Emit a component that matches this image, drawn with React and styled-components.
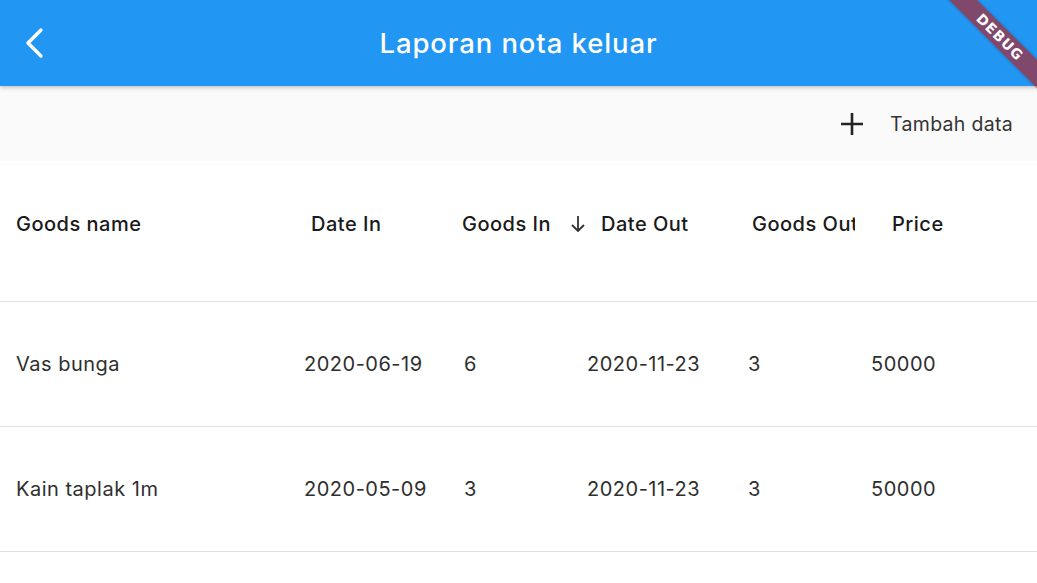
import React from 'react';
import styled, { createGlobalStyle } from 'styled-components';

const GlobalStyle = createGlobalStyle`
  html, body {
    margin: 0;
    padding: 0;
    background: #fafafa;
    font-family: Inter, Roboto, "Noto Sans", sans-serif;
  }
`;

const Screen = styled.div`
  position: relative;
  width: 1037px;
  height: 583px;
  overflow: hidden;
  background: #ffffff;
  display: flex;
  flex-direction: column;
`;

const AppBar = styled.header`
  height: 86px;
  flex-shrink: 0;
  background: #2196f3;
  display: flex;
  align-items: center;
  position: relative;
  z-index: 2;
  box-shadow: 0 2px 4px rgba(0, 0, 0, 0.2);
`;

const BackButton = styled.button`
  width: 70px;
  height: 86px;
  border: 0;
  background: transparent;
  padding: 0 0 0 22px;
  display: flex;
  align-items: center;
  color: #ffffff;
  cursor: pointer;
`;

const Title = styled.h1`
  flex: 1;
  margin: 0 70px 0 0;
  text-align: center;
  color: #ffffff;
  font-family: Inter, sans-serif;
  font-size: 27.5px;
  font-weight: 500;
  letter-spacing: 0.9px;
`;

const DebugRibbon = styled.div`
  position: absolute;
  left: 900px;
  top: 27px;
  width: 200px;
  height: 20px;
  transform: rotate(45deg);
  background: rgba(183, 28, 28, 0.63);
  color: #ffffff;
  font-family: "DejaVu Sans", sans-serif;
  font-weight: 900;
  font-size: 14px;
  letter-spacing: 1px;
  display: flex;
  align-items: center;
  justify-content: center;
  z-index: 5;
  box-shadow: 0 0 3px rgba(0, 0, 0, 0.25);
`;

const Toolbar = styled.div`
  height: 75px;
  flex-shrink: 0;
  background: #fafafa;
  display: flex;
  align-items: center;
  justify-content: flex-end;
  padding-right: 24px;
`;

const AddButton = styled.button`
  display: flex;
  align-items: center;
  gap: 26px;
  border: 0;
  background: transparent;
  color: #333333;
  font-family: Inter, sans-serif;
  font-size: 19.5px;
  letter-spacing: 0.3px;
  cursor: pointer;
  padding: 0;
`;

const Table = styled.div`
  background: #ffffff;
  display: flex;
  flex-direction: column;
`;

const HeadRow = styled.div`
  display: grid;
  grid-template-columns: 300px 160px 108px 177px 110px 1fr;
  height: 141px;
  box-sizing: border-box;
  padding-bottom: 15px;
  align-items: center;
  border-bottom: 1px solid #e0e0e0;
`;

const DataRow = styled(HeadRow)`
  height: 125px;
  padding-bottom: 0;
`;

const HeadCell = styled.div`
  display: flex;
  align-items: center;
  padding-left: ${p => p.$pad}px;
  font-size: 20px;
  letter-spacing: 0.5px;
  font-weight: 500;
  color: #1a1a1a;
  white-space: nowrap;
  overflow: hidden;
`;

const SortArrow = styled.span`
  display: flex;
  margin-right: 15px;
  color: #333333;
`;

const Cell = styled.div`
  padding-left: ${p => p.$pad}px;
  font-size: 20px;
  letter-spacing: 0.5px;
  color: #2f2f2f;
  white-space: nowrap;
`;

const columns = [
  { label: 'Goods name', key: 'name', head: 16, cell: 16 },
  { label: 'Date In', key: 'dateIn', head: 11, cell: 4 },
  { label: 'Goods In', key: 'goodsIn', head: 2, cell: 4 },
  { label: 'Date Out', key: 'dateOut', head: 2, cell: 19, sorted: true },
  { label: 'Goods Out', key: 'goodsOut', head: 7, cell: 3 },
  { label: 'Price', key: 'price', head: 37, cell: 16 },
];

const rows = [
  { name: 'Vas bunga', dateIn: '2020-06-19', goodsIn: 6, dateOut: '2020-11-23', goodsOut: 3, price: 50000 },
  { name: 'Kain taplak 1m', dateIn: '2020-05-09', goodsIn: 3, dateOut: '2020-11-23', goodsOut: 3, price: 50000 },
];

export default function App() {
  return (
    <Screen>
      <GlobalStyle />
      <AppBar>
        <BackButton aria-label="back">
          <svg width="24" height="32" viewBox="0 0 24 32" fill="none">
            <path d="M19 3 L6 16 L19 29" stroke="#fff" strokeWidth="3.4" strokeLinecap="round" strokeLinejoin="round" />
          </svg>
        </BackButton>
        <Title>Laporan nota keluar</Title>
      </AppBar>
      <DebugRibbon>DEBUG</DebugRibbon>
      <Toolbar>
        <AddButton>
          <svg width="24" height="24" viewBox="0 0 24 24">
            <path d="M12 1v22M1 12h22" stroke="#222" strokeWidth="2.6" />
          </svg>
          Tambah data
        </AddButton>
      </Toolbar>
      <Table>
        <HeadRow>
          {columns.map(c => (
            <HeadCell key={c.key} $pad={c.head}>
              {c.sorted && (
                <SortArrow>
                  <svg width="16" height="18" viewBox="0 0 16 18" fill="none">
                    <path d="M8 1v15M2 10l6 6 6-6" stroke="#333" strokeWidth="1.8" />
                  </svg>
                </SortArrow>
              )}
              {c.label}
            </HeadCell>
          ))}
        </HeadRow>
        {rows.map(r => (
          <DataRow key={r.name}>
            {columns.map(c => (
              <Cell key={c.key} $pad={c.cell}>{r[c.key]}</Cell>
            ))}
          </DataRow>
        ))}
      </Table>
    </Screen>
  );
}
